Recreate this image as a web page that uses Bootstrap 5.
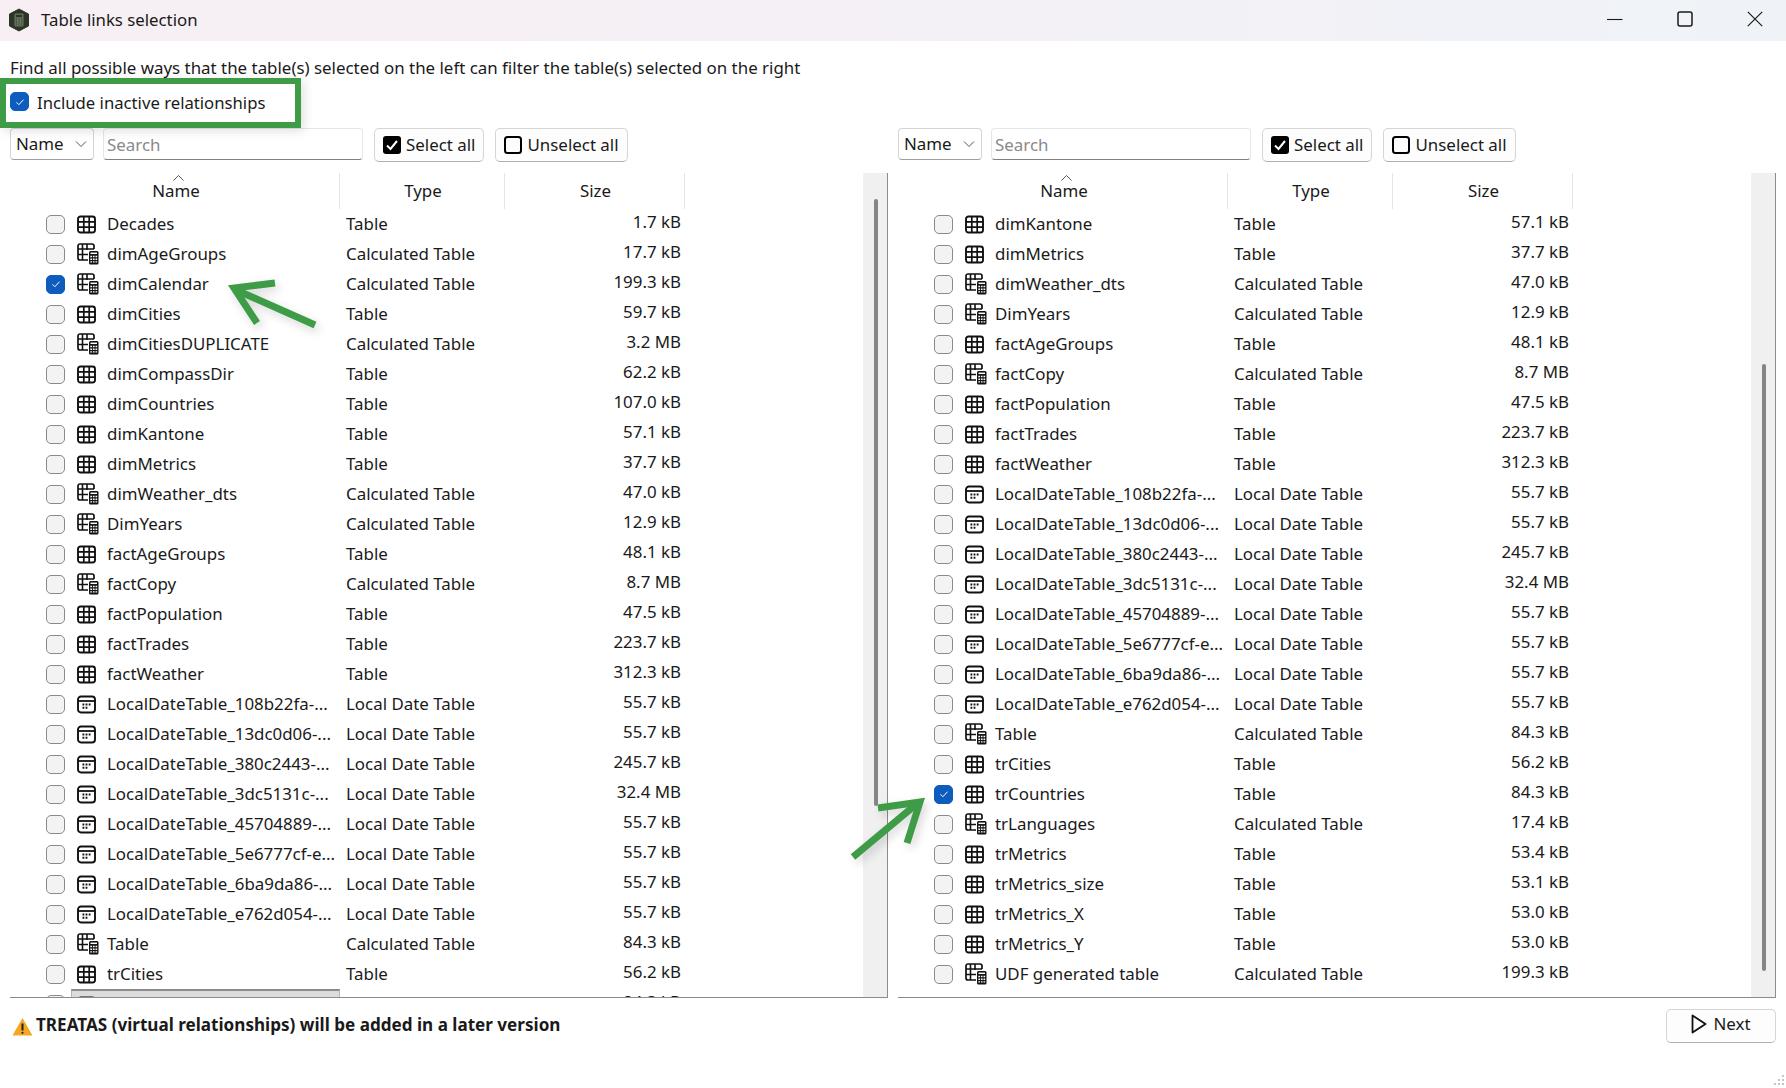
<!DOCTYPE html>
<html lang="en">
<head>
  <meta charset="UTF-8">
  <title>Table links selection</title>
  <link href="https://cdn.jsdelivr.net/npm/bootstrap@5.3.3/dist/css/bootstrap.min.css" rel="stylesheet">
  <style>
    html, body { height: 100%; }
    body { font-family: "Noto Sans", "Liberation Sans", sans-serif; font-size: 16.9px; color: #1a1a1a; background: #fff; overflow: hidden; }
    .app-window { width: 1786px; height: 1088px; position: relative; overflow: hidden; }
    .title-bar { height: 41px; background: linear-gradient(90deg, #f7eff3 0%, #f5f0f5 40%, #eff3f8 100%); }
    .title-icon { margin-left: 8px; margin-bottom: 2px; }
    .title-text { margin-left: 11px; margin-bottom: 2px; font-size: 16.8px; }
    .win-group { margin-right: -4px; }
    .win-btn { width: 70px; height: 41px; padding-bottom: 4px; }
    .intro-line { padding: 14px 0 0 10px; line-height: 26px; height: 40px; }
    .check-line { padding-left: 10px; height: 47px; padding-top: 10px; line-height: 24px; font-size: 16.7px; }
    .fake-check { width: 19px; height: 19px; border-radius: 5px; border: 1px solid #8a8a8a; background: #f3f3f3; flex: none; }
    .fake-check.on { background: #0f5cbf; border-color: #0f5cbf; }
    .fake-check.top-check { margin-top: 1px; }
    .panes { gap: 10px; padding-left: 10px; }
    .pane { width: 878px; }
    .tool-row { height: 45px; }
    .select-box { width: 84px; height: 32px; border: 1px solid #d5d5d5; border-bottom-color: #a0a0a0; border-radius: 4px; padding: 0 6px 0 5px; }
    .search-box { width: 260px; height: 32px; margin-left: 9px; border: 1px solid #e6e6e6; border-bottom: 1.5px solid #808080; border-radius: 4px; padding: 2px 3px 0; color: #8a8a8a; }
    .tool-btn { height: 34px; margin-left: 11px; padding: 0 8px; gap: 5px; border: 1px solid #d5d5d5; border-bottom-color: #b0b0b0; border-radius: 5px; background: #fdfdfd; color: #1a1a1a; font-size: 16.9px; }
    .grid-area { height: 825px; border-bottom: 1.5px solid #8c8c8c; border-right: 1.5px solid #8c8c8c; position: relative; }
    .grid-inner { flex: 1; overflow: hidden; }
    .col-name { width: 330px; padding-left: 3px; }
    .col-type { width: 165px; padding-left: 2px; }
    .col-size { width: 180px; padding-left: 2px; }
    .head-row { height: 36px; position: relative; }
    .head-cell { text-align: center; border-right: 1px solid #e4e4e4; line-height: 22px; padding-top: 7px; }
    .sort-caret { position: absolute; left: 163px; top: 2px; }
    .list-row { height: 30px; line-height: 30px; }
    .name-cell { width: 330px; padding-left: 36px; gap: 12px; }
    .tbl-icon { flex: none; }
    .icon-slot { display: flex; }
    .icon-slot.wide { margin-right: -3px; }
    .name-label { white-space: nowrap; }
    .name-box { flex: 1; height: 30px; margin-left: -6px; padding-left: 6px; gap: 11px; }
    .name-box.picked { background: #dcdcdc; border-top: 2px solid #8c8c8c; border-left: 1px solid #b5b5b5; border-right: 1px solid #b5b5b5; padding-left: 5px; }
    .type-cell { width: 165px; padding-left: 6px; }
    .size-cell { width: 176px; text-align: right; padding-bottom: 5px; line-height: 25px; }
    .scroll-track { width: 24px; background: #f0f0f0; position: relative; flex: none; }
    .scroll-thumb { position: absolute; left: 10.5px; width: 4px; border-radius: 2px; background: #858585; }
    .foot-row { height: 57px; padding: 11px 10px 0 12px; }
    .warn-icon { margin-top: 8px; }
    .warn-text { font-weight: 700; font-size: 17.1px; margin-left: 3px; margin-top: 3px; }
    .next-btn { width: 110px; height: 34px; gap: 6px; border: 1px solid #d5d5d5; border-bottom-color: #b0b0b0; border-radius: 5px; background: #fdfdfd; font-size: 16.9px; color: #1a1a1a; padding: 0 0 4px; }
    .green-frame { position: absolute; left: 0; top: 78px; width: 301px; height: 50px; border: 6px solid #3f9c46; box-shadow: 3px 3px 10px rgba(0,0,0,.12); pointer-events: none; }
    .arrow-layer { position: absolute; left: 0; top: 0; pointer-events: none; filter: drop-shadow(3px 4px 5px rgba(0,0,0,.16)); }
    .resize-grip { position: absolute; right: 1px; bottom: 1px; }
  </style>
</head>
<body>
  <svg width="0" height="0" class="position-absolute">
    <defs>
      <symbol id="ic-table" viewBox="0 0 19 19">
        <rect x="1" y="1.500" width="17" height="16" rx="2.500" fill="none" stroke="#111" stroke-width="1.900"/>
        <path d="M6.800 1.500v16M12.200 1.500v16M1 6.800h17M1 12.200h17" stroke="#111" stroke-width="1.700" fill="none"/>
      </symbol>
      <symbol id="ic-calc" viewBox="0 0 22 22">
        <path d="M11 17H3a2 2 0 0 1-2-2V3a2 2 0 0 1 2-2h12a2 2 0 0 1 2 2v3" fill="none" stroke="#111" stroke-width="1.700"/>
        <path d="M5.500 1v16M10 1v6M1 6h16M1 11.500h10" stroke="#111" stroke-width="1.600" fill="none"/>
        <rect x="11.500" y="7.500" width="10" height="14" rx="1.500" fill="#fff" stroke="#fff" stroke-width="1"/>
        <rect x="12" y="8" width="9.500" height="13.500" rx="1.500" fill="#111"/>
        <path d="M13.500 10.300h6.500" stroke="#fff" stroke-width="1.500"/>
        <path d="M13.300 13.500h1.700M15.900 13.500h1.700M18.500 13.500h1.700M13.300 16.200h1.700M15.900 16.200h1.700M18.500 16.200h1.700M13.300 18.900h1.700M15.900 18.900h1.700M18.500 18.900h1.700" stroke="#fff" stroke-width="1.400"/>
      </symbol>
      <symbol id="ic-date" viewBox="0 0 19 19">
        <rect x="1" y="1.500" width="17" height="16" rx="3" fill="none" stroke="#111" stroke-width="1.900"/>
        <path d="M1 6h17" stroke="#111" stroke-width="1.800"/>
        <path d="M5.500 9.500h1.800M8.600 9.500h1.800M11.700 9.500h1.800M5.500 12.800h1.800M8.600 12.800h1.800" stroke="#111" stroke-width="1.900"/>
      </symbol>
    </defs>
  </svg>

  <div class="app-window">
    <div class="title-bar d-flex align-items-center">
      <svg class="title-icon" width="22" height="24" viewBox="0 0 22 24">
        <path d="M11 1l9.500 5v12L11 23 1.500 18V6z" fill="#2d3527" stroke="#2d3527" stroke-linejoin="round"/>
        <rect x="6.500" y="5.500" width="9" height="13" rx="1" fill="#6d7563"/>
        <rect x="7.700" y="6.800" width="6.600" height="2.400" fill="#2d3527"/>
        <path d="M7.700 11h6.600M7.700 13h6.600M7.700 15h6.600M7.700 17h6.600" stroke="#2d3527" stroke-width="1" stroke-dasharray="1.200 1.500"/>
      </svg>
      <span class="title-text">Table links selection</span>
      <div class="ms-auto d-flex win-group">
        <div class="win-btn d-flex align-items-center justify-content-center">
          <svg width="16" height="16" viewBox="0 0 16 16"><path d="M0 8.500h15.500" stroke="#1a1a1a" stroke-width="1.100"/></svg>
        </div>
        <div class="win-btn d-flex align-items-center justify-content-center">
          <svg width="16" height="16" viewBox="0 0 16 16"><rect x="1" y="1" width="14" height="14" rx="2" fill="none" stroke="#1a1a1a" stroke-width="1.500"/></svg>
        </div>
        <div class="win-btn d-flex align-items-center justify-content-center">
          <svg width="16" height="16" viewBox="0 0 16 16"><path d="M.8.800l14.400 14.400M15.200.800L.8 15.200" stroke="#1a1a1a" stroke-width="1.200"/></svg>
        </div>
      </div>
    </div>

    <div class="intro-line">Find all possible ways that the table(s) selected on the left can filter the table(s) selected on the right</div>
    <div class="check-line d-flex align-items-start gap-2">
      <span class="fake-check on top-check d-flex align-items-center justify-content-center">
        <svg width="12" height="12" viewBox="0 0 12 12"><path d="M2.500 6.300l2.400 2.400 4.600-5" fill="none" stroke="#fff" stroke-width="1"/></svg>
      </span>
      <span>Include inactive relationships</span>
    </div>

    <div class="panes d-flex">
      <section class="pane" id="leftPane"></section>
      <section class="pane" id="rightPane"></section>
    </div>

    <div class="foot-row d-flex align-items-start">
      <svg class="warn-icon" width="21" height="19" viewBox="0 0 21 19">
        <path d="M10.500 1L20.500 18.500H.5z" fill="#f5a623"/>
        <path d="M10.500 6.500v7" stroke="#222" stroke-width="2"/>
        <circle cx="10.500" cy="15.800" r="1.100" fill="#222"/>
      </svg>
      <span class="warn-text">TREATAS (virtual relationships) will be added in a later version</span>
      <button type="button" class="next-btn ms-auto d-flex align-items-center justify-content-center">
        <svg width="16" height="20" viewBox="0 0 16 20"><path d="M1.500 1.500L14.500 10 1.500 18.500z" fill="none" stroke="#111" stroke-width="1.800" stroke-linejoin="round"/></svg>
        Next
      </button>
    </div>

    <div class="green-frame"></div>
    <svg class="arrow-layer" width="1786" height="1088" viewBox="0 0 1786 1088">
      <g fill="none" stroke="#3f9c46" stroke-width="7">
        <path d="M315 325L234 289"/>
        <path d="M275 283L234 288L257 323" stroke-miterlimit="10"/>
        <path d="M853 857L919 802"/>
        <path d="M878 808L920 802L907 843" stroke-miterlimit="10"/>
      </g>
    </svg>
    <svg class="resize-grip" width="12" height="12" viewBox="0 0 12 12" fill="#c4c4c4">
      <rect x="9" y="0" width="2" height="2"/><rect x="5" y="4" width="2" height="2"/><rect x="9" y="4" width="2" height="2"/>
      <rect x="1" y="8" width="2" height="2"/><rect x="5" y="8" width="2" height="2"/><rect x="9" y="8" width="2" height="2"/>
    </svg>
  </div>

  <script src="https://cdn.jsdelivr.net/npm/bootstrap@5.3.3/dist/js/bootstrap.bundle.min.js"></script>
  <script>
    const T = "Table", C = "Calculated Table", D = "Local Date Table";
    const shared = [
      ["LocalDateTable_108b22fa-...", D, "55.7 kB"],
      ["LocalDateTable_13dc0d06-...", D, "55.7 kB"],
      ["LocalDateTable_380c2443-...", D, "245.7 kB"],
      ["LocalDateTable_3dc5131c-...", D, "32.4 MB"],
      ["LocalDateTable_45704889-...", D, "55.7 kB"],
      ["LocalDateTable_5e6777cf-e...", D, "55.7 kB"],
      ["LocalDateTable_6ba9da86-...", D, "55.7 kB"],
      ["LocalDateTable_e762d054-...", D, "55.7 kB"],
      ["Table", C, "84.3 kB"],
      ["trCities", T, "56.2 kB"]
    ];
    const middle = [
      ["dimKantone", T, "57.1 kB"],
      ["dimMetrics", T, "37.7 kB"],
      ["dimWeather_dts", C, "47.0 kB"],
      ["DimYears", C, "12.9 kB"],
      ["factAgeGroups", T, "48.1 kB"],
      ["factCopy", C, "8.7 MB"],
      ["factPopulation", T, "47.5 kB"],
      ["factTrades", T, "223.7 kB"],
      ["factWeather", T, "312.3 kB"]
    ];
    const leftRows = [
      ["Decades", T, "1.7 kB"],
      ["dimAgeGroups", C, "17.7 kB"],
      ["dimCalendar", C, "199.3 kB", "on"],
      ["dimCities", T, "59.7 kB"],
      ["dimCitiesDUPLICATE", C, "3.2 MB"],
      ["dimCompassDir", T, "62.2 kB"],
      ["dimCountries", T, "107.0 kB"],
      ...middle, ...shared,
      // only the top few pixels of this row show, its labels are below the fold
      ["", T, "84.3 kB", "", "picked"]
    ];
    const rightRows = [
      ...middle, ...shared,
      ["trCountries", T, "84.3 kB", "on"],
      ["trLanguages", C, "17.4 kB"],
      ["trMetrics", T, "53.4 kB"],
      ["trMetrics_size", T, "53.1 kB"],
      ["trMetrics_X", T, "53.0 kB"],
      ["trMetrics_Y", T, "53.0 kB"],
      ["UDF generated table", C, "199.3 kB"]
    ];

    function icon(type) {
      if (type === C) return '<span class="icon-slot wide"><svg class="tbl-icon" width="22" height="22"><use href="#ic-calc"/></svg></span>';
      if (type === D) return '<span class="icon-slot"><svg class="tbl-icon" width="19" height="19"><use href="#ic-date"/></svg></span>';
      return '<span class="icon-slot"><svg class="tbl-icon" width="19" height="19"><use href="#ic-table"/></svg></span>';
    }

    function rowHtml(r) {
      const tick = r[3] === "on"
        ? '<svg width="12" height="12" viewBox="0 0 12 12"><path d="M2.500 6.300l2.400 2.400 4.600-5" fill="none" stroke="#fff" stroke-width="1"/></svg>' : "";
      return `<div class="list-row d-flex">
        <div class="name-cell d-flex align-items-center">
          <span class="fake-check ${r[3] === "on" ? "on" : ""} d-flex align-items-center justify-content-center">${tick}</span>
          <div class="name-box d-flex align-items-center ${r[4] || ""}">
            ${icon(r[1])}
            <span class="name-label">${r[0]}</span>
          </div>
        </div>
        <div class="type-cell">${r[4] ? "" : r[1]}</div>
        <div class="size-cell">${r[2]}</div>
      </div>`;
    }

    function paneHtml(rows, thumbTop, thumbHeight) {
      return `<div class="tool-row d-flex align-items-start">
          <div class="select-box d-flex align-items-center justify-content-between">Name
            <svg width="12" height="8" viewBox="0 0 12 8"><path d="M1 1.500l5 5 5-5" fill="none" stroke="#555" stroke-width="1"/></svg>
          </div>
          <div class="search-box d-flex align-items-center">Search</div>
          <button type="button" class="tool-btn d-flex align-items-center">
            <svg width="18" height="18" viewBox="0 0 18 18"><rect width="18" height="18" rx="3" fill="#000"/><path d="M4 9.500l3.500 3.500 6.500-8" fill="none" stroke="#fff" stroke-width="2"/></svg>
            Select all
          </button>
          <button type="button" class="tool-btn d-flex align-items-center">
            <svg width="18" height="18" viewBox="0 0 18 18"><rect x="1" y="1" width="16" height="16" rx="2.500" fill="none" stroke="#000" stroke-width="2"/></svg>
            Unselect all
          </button>
        </div>
        <div class="grid-area d-flex">
          <div class="grid-inner">
            <div class="head-row d-flex">
              <svg class="sort-caret" width="11" height="6" viewBox="0 0 11 6"><path d="M.5 5.500l5-5 5 5" fill="none" stroke="#555" stroke-width="1"/></svg>
              <div class="head-cell col-name">Name</div>
              <div class="head-cell col-type">Type</div>
              <div class="head-cell col-size">Size</div>
            </div>
            ${rows.map(rowHtml).join("")}
          </div>
          <div class="scroll-track"><div class="scroll-thumb" style="top:${thumbTop}px;height:${thumbHeight}px"></div></div>
        </div>`;
    }

    document.getElementById("leftPane").innerHTML = paneHtml(leftRows, 26, 607);
    document.getElementById("rightPane").innerHTML = paneHtml(rightRows, 191, 607);
  </script>
</body>
</html>
